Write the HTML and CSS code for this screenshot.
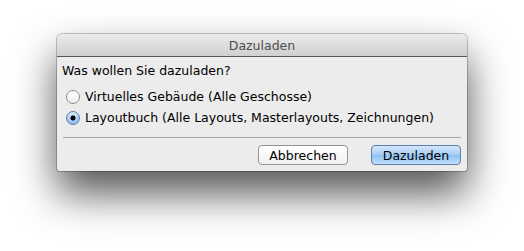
FILE: index.html
```html
<!DOCTYPE html>
<html lang="de">
<head>
    <meta charset="UTF-8" />
    <title>Dazuladen</title>
    <link rel="stylesheet" href="styles.css">
</head>
<body>
    <div class="window">
        <div class="titlebar">Dazuladen</div>
        <div class="content">
            <p class="question">Was wollen Sie dazuladen?</p>
            <label class="option"><span class="radio"></span>Virtuelles Gebäude (Alle Geschosse)</label>
            <label class="option"><span class="radio checked"></span>Layoutbuch (Alle Layouts, Masterlayouts, Zeichnungen)</label>
            <div class="separator"></div>
            <div class="buttons">
                <button class="btn">Abbrechen</button>
                <button class="btn default">Dazuladen</button>
            </div>
        </div>
    </div>
</body>
</html>
```

FILE: styles.css
```css
html,
body {
    height: 100%;
}

body {
    margin: 0;
    padding-top: 34px;
    box-sizing: border-box;
    background: #fff;
    font-family: "DejaVu Sans", sans-serif;
    font-size: 12.5px;
    color: #000;
}

.window {
    width: 410px;
    margin-left: 57px;
    border-radius: 5px 5px 3px 3px;
    background: #ececec;
    box-shadow: 0 0 0 1px rgba(0, 0, 0, 0.22), 0 22px 42px rgba(0, 0, 0, 0.68);
    overflow: hidden;
}

.titlebar {
    height: 23px;
    line-height: 23px;
    text-align: center;
    color: #4d4d4d;
    background: linear-gradient(#ebebeb, #d0d0d0);
    border-bottom: 1px solid #555;
    box-sizing: border-box;
}

.content {
    padding: 6px 5px 6px 5px;
}

.question {
    margin: 0 0 7px 0;
    height: 16px;
    line-height: 16px;
}

.option {
    display: flex;
    align-items: center;
    height: 21px;
    padding-left: 4px;
}

.radio {
    width: 14px;
    height: 14px;
    border-radius: 50%;
    border: 1px solid #8c8c8c;
    box-sizing: border-box;
    background: linear-gradient(#fff, #eeeeee);
    margin-right: 5px;
}

.radio.checked {
    border-color: #5a7da6;
    background: radial-gradient(#000 0 2.2px, transparent 2.8px), linear-gradient(#d2e6fb, #8fbbef);
}

.separator {
    height: 1px;
    background: #a9a9a9;
    margin: 9px 1px 7px 1px;
}

.buttons {
    display: flex;
    justify-content: flex-end;
    gap: 23px;
    padding-right: 1px;
}

.btn {
    width: 90px;
    height: 20px;
    font-family: "DejaVu Sans", sans-serif;
    font-size: 12.5px;
    padding: 0;
    border: 1px solid #959595;
    border-radius: 4px;
    background: linear-gradient(#ffffff, #f1f1f1);
    color: #000;
}

.btn.default {
    border-color: #5f7fa8;
    background: linear-gradient(#d5e8fc, #a4cbf4 50%, #8ec0f3 51%, #c1e0fb);
}
```
